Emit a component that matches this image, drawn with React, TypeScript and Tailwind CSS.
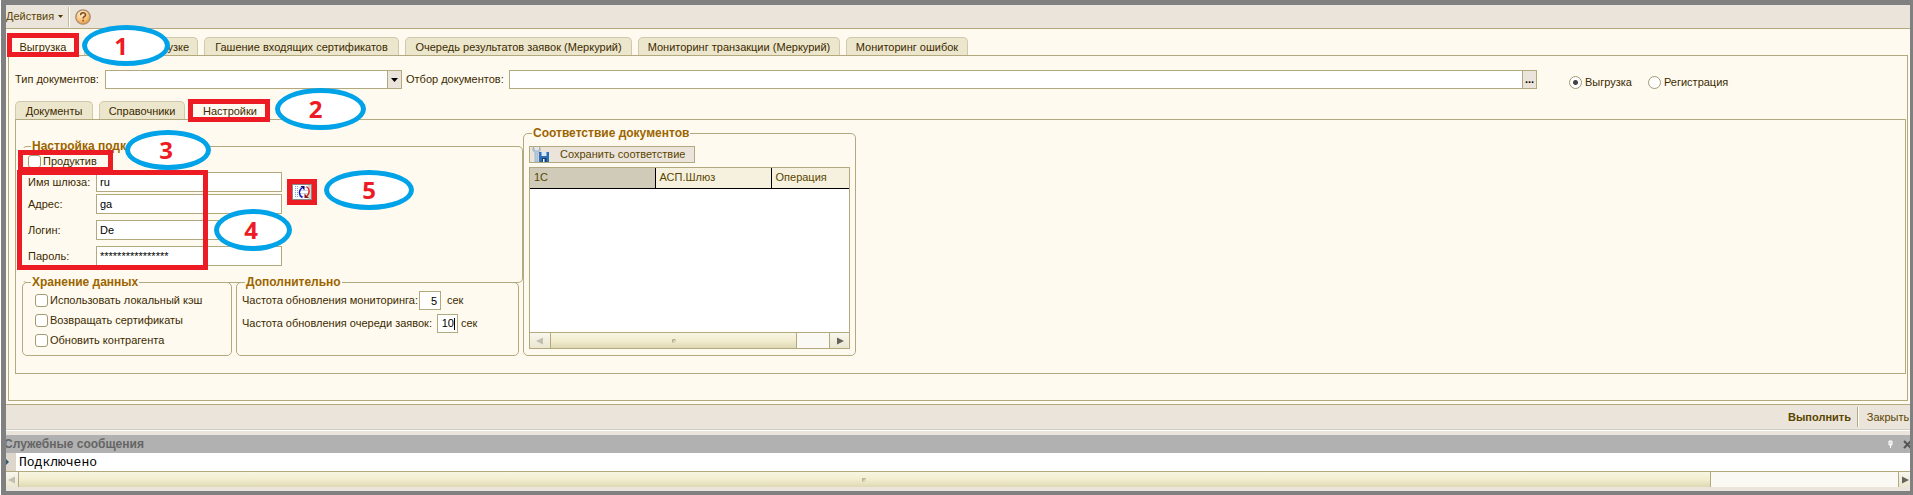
import { useState } from "react";
import type { ReactNode } from "react";

type Tab = { title: string; width: string }

const mainTabs: Tab[] = [
  { title: "Выгрузка", width: "w-[70px]" },
  { title: "Данные к выгрузке", width: "w-[114px]" },
  { title: "Гашение входящих сертификатов", width: "w-[195px]" },
  { title: "Очередь результатов заявок (Меркурий)", width: "w-[227px]" },
  { title: "Мониторинг транзакции (Меркурий)", width: "w-[202px]" },
  { title: "Мониторинг ошибок", width: "w-[122px]" },
]

const subTabs: Tab[] = [
  { title: "Документы", width: "w-[78px]" },
  { title: "Справочники", width: "w-[86px]" },
  { title: "Настройки", width: "w-[78px]" },
]

const gatewayFields = [
  { id: "gateName", label: "Имя шлюза:", value: "ru", space: "mb-0.5" },
  { id: "address", label: "Адрес:", value: "ga", space: "mb-1.5" },
  { id: "login", label: "Логин:", value: "De", space: "mb-1.5" },
  { id: "password", label: "Пароль:", value: "****************", space: "text-[11px]" },
]

const frames = [
  "left-[7px] top-[33px] w-[72px] h-[24px]",
  "left-[188px] top-[99px] w-[82px] h-[23px]",
  "left-[18px] top-[150px] w-[95px] h-[22px]",
  "left-[17px] top-[170px] w-[191px] h-[100px]",
  "left-[287px] top-[179px] w-[30px] h-[26px]",
]

const bubbles = [
  { n: 1, place: "left-[82px] top-[25px] w-[88px] h-[41px] pr-2.5" },
  { n: 2, place: "left-[275px] top-[88px] w-[91px] h-[42px] pr-2.5" },
  { n: 3, place: "left-[125px] top-[130px] w-[86px] h-[40px] pr-1" },
  { n: 4, place: "left-[214px] top-[209px] w-[78px] h-[42px] pr-1" },
  { n: 5, place: "left-[324px] top-[170px] w-[90px] h-[40px]" },
]

function Tabs({ tabs, active, onSelect }: { tabs: Tab[]; active: number; onSelect: (i: number) => void }) {
  return (
    <div role="tablist" className="flex items-end gap-1.5">
      {tabs.map((tab, i) => (
        <button
          key={tab.title}
          role="tab"
          aria-selected={i === active}
          onClick={() => onSelect(i)}
          className={`shrink-0 rounded-t-[5px] border border-b-0 text-center leading-[16px] whitespace-nowrap ${tab.width} ${
            i === active ? "-mb-px h-[19px] border-[#b3a97f] border-t-[#ffd58a] bg-[#fffaef]" : "h-[18px] border-[#cfc8ac] bg-[#ece6cd]"
          }`}
        >
          {tab.title}
        </button>
      ))}
    </div>
  )
}

function Group({ title, className, children }: { title: string; className: string; children: ReactNode }) {
  return (
    <fieldset className={`min-w-0 rounded-[5px] border border-[#b3a97f] ${className}`}>
      <legend className="relative ml-2 bg-[#fffaef] px-px text-[12px] leading-[14px] font-bold text-[#9c6500]">{title}</legend>
      {children}
    </fieldset>
  )
}

function Check({ label }: { label: string }) {
  return (
    <label className="flex h-[13px] items-center gap-0.5">
      <input type="checkbox" className="size-[13px] appearance-none rounded-[3px] border border-[#a39a72] bg-white checked:bg-[#9c6500]" />
      {label}
    </label>
  )
}

function Radio({ label, checked }: { label: string; checked?: boolean }) {
  return (
    <label className="flex items-center gap-[3px]">
      <input
        type="radio"
        name="mode"
        defaultChecked={checked}
        className="size-[13px] appearance-none rounded-full border border-[#a39a72] bg-white checked:bg-[radial-gradient(circle,#444_0_2px,#fff_3px)]"
      />
      {label}
    </label>
  )
}

function Arrow({ dir, color }: { dir: "left" | "right"; color: string }) {
  return (
    <svg viewBox="0 0 8 8" className="size-2 shrink-0" fill={color}>
      <path d={dir === "left" ? "M7 0.5v7L0 4z" : "M1 0.5v7L8 4z"} />
    </svg>
  )
}

function ScrollBar({ edge, thumb, track }: { edge: string; thumb: string; track: string }) {
  return (
    <div className="flex h-4 border-t border-[#b3a97f] bg-[#fbf9f3]">
      <button aria-label="Влево" className={`flex items-center justify-center bg-linear-to-b from-[#f9f7ee] to-[#ebe6cf] ${edge}`}>
        <Arrow dir="left" color="#c3bfb0" />
      </button>
      <div className={`flex items-center justify-center border-x border-[#b3a97f] bg-linear-to-b from-[#f8f5e2] via-[#f2edcf] to-[#dfd8b4] ${thumb}`}>
        <span className="size-1 rounded-full border-t border-l border-[#a8a184] bg-[#e0dabd]" />
      </div>
      <div className={track} />
      <button aria-label="Вправо" className={`flex items-center justify-center border-l border-[#b3a97f] bg-linear-to-b from-[#f9f7ee] to-[#ebe6cf] ${edge}`}>
        <Arrow dir="right" color="#66645c" />
      </button>
    </div>
  )
}

function HelpIcon() {
  return (
    <svg viewBox="0 0 16 16" className="size-4">
      <defs>
        <radialGradient id="help" cx="0.4" cy="0.3" r="0.8">
          <stop offset="0" stopColor="#fff1cf" />
          <stop offset="0.55" stopColor="#fbc278" />
          <stop offset="1" stopColor="#e58a2c" />
        </radialGradient>
      </defs>
      <circle cx="8" cy="8" r="7.2" fill="url(#help)" stroke="#a58a74" strokeWidth="1.3" />
      <path d="M5.6 6.2c0-3.2 4.9-3 4.9-.2 0 1.7-2.4 1.7-2.4 3.4" fill="none" stroke="#7a4a22" strokeWidth="1.5" />
      <rect x="7.3" y="10.8" width="1.6" height="1.6" fill="#7a4a22" />
    </svg>
  )
}

function RefreshIcon() {
  return (
    <svg viewBox="0 0 20 16" className="h-4 w-5">
      <rect width="20" height="16" fill="#fff" />
      <path d="M17.5 1v14" stroke="#ddd3c4" strokeWidth="3" />
      <rect x="0.5" y="0.5" width="19" height="15" fill="none" stroke="#111" strokeDasharray="1 1" />
      <path d="M3.5 2v12M5.5 2v12" stroke="#6fa6dc" strokeDasharray="1 1" />
      <path d="M7 3.5h9M7 6.5h9M7 9.5h9M7 12.500h9" stroke="#cfd8e2" />
      <path d="M10.500 13.500C6.500 11.500 6.500 6 10 4" fill="none" stroke="#1212c8" strokeWidth="1.400" />
      <path d="M8.500 2h4v4.500z" fill="#101080" />
      <path d="M14.500 2.500c3.500 2 3.500 7 .5 9.500" fill="none" stroke="#e02020" strokeWidth="1.400" />
      <path d="M12.500 9.500V14h4.500z" fill="#8c1a1a" />
    </svg>
  )
}

function SaveIcon() {
  return (
    <svg viewBox="0 0 18 15" className="h-[15px] w-[18px]">
      <path d="M1.500 0C0 2 .8 4.500 3 5.500V15h3V5.500C8.500 4.500 9 2 7.500 0v3L5.500 4h-2L2.500 3z" fill="#b7cbdd" stroke="#8aa4bd" strokeWidth="0.600" />
      <path d="M7 5h10v10H7z" fill="#2f6fb4" />
      <path d="M9.500 5h5v4h-5z" fill="#d9e9f8" />
      <path d="M10 11h4.500v4H10z" fill="#123f78" />
      <path d="M11 12h1.500v3H11z" fill="#fff" />
    </svg>
  )
}

export default function App() {
  const [mainTab, setMainTab] = useState(0)
  const [subTab, setSubTab] = useState(2)

  return (
    <div className="relative ml-px overflow-hidden border-t-[5px] border-r-[3px] border-b-[5px] border-l-[5px] border-[#808080] bg-[#fffaef] font-['Liberation_Sans',Arial,sans-serif] text-[11px] leading-[13px] text-[#3b2a00]">
      {/* toolbar */}
      <div className="flex h-6 items-center border-b border-[#b3a97f] bg-[#ebe4da]">
        <button className="flex items-center gap-1 text-[#5a4500]">
          Действия
          <svg viewBox="0 0 5 3" className="h-[3px] w-[5px]" fill="#4a3800"><path d="M0 0h5L2.500 3z" /></svg>
        </button>
        <span className="mr-[5px] ml-[5px] h-5 w-0.5 border-l border-[#c3ba96] bg-white" />
        <button aria-label="Справка"><HelpIcon /></button>
      </div>

      {/* main tabs */}
      <div className="px-0.5 pt-2 pb-[3px]">
        <Tabs tabs={mainTabs} active={mainTab} onSelect={setMainTab} />

        <div className="border border-[#b3a97f] pt-3.5 pr-px pb-[26px] pl-1.5">
          <div className="flex items-end">
            <div className="flex items-center">
              <label htmlFor="docType" className="w-[90px]">Тип документов:</label>
              <div className="relative h-[19px] w-[297px]">
                <select id="docType" className="size-full appearance-none border border-[#b3a97f] bg-white px-1">
                  <option></option>
                </select>
                <span className="pointer-events-none absolute inset-y-0 right-0 flex w-[15px] items-center justify-center border border-[#b3a97f] bg-[#ebe4da]">
                  <svg viewBox="0 0 7 4" className="h-1 w-[7px]"><path d="M0 0h7L3.500 4z" /></svg>
                </span>
              </div>
            </div>
            <div className="ml-1 flex flex-1 items-center">
              <label htmlFor="docFilter" className="w-[103px]">Отбор документов:</label>
              <input id="docFilter" className="h-[19px] min-w-0 flex-1 border border-[#b3a97f] bg-white px-1" />
              <button className="-ml-px h-[19px] w-[15px] border border-[#b3a97f] bg-[#ebe4da] font-bold text-black">...</button>
            </div>
            <div className="ml-8 flex w-[337px] gap-4">
              <Radio label="Выгрузка" checked />
              <Radio label="Регистрация" />
            </div>
          </div>

          <div className="pt-3">
            <Tabs tabs={subTabs} active={subTab} onSelect={setSubTab} />
            <div className="flex border border-[#b3a97f] pt-1.5 pb-[17px] pl-1.5">
              <div className="w-[501px] pt-[13px]">
                <Group title="Настройка подключения" className="border-l-transparent pb-4">
                  <div className="flex pt-0.5 pl-[5px]">
                    <div>
                      <div className="pb-1"><Check label="Продуктив" /></div>
                      {gatewayFields.map((field) => (
                        <div key={field.id} className={`flex items-center ${field.space}`}>
                          <label htmlFor={field.id} className="w-[68px]">{field.label}</label>
                          <input id={field.id} defaultValue={field.value} className="h-5 w-[186px] border border-[#b3a97f] bg-white px-[3px] text-black" />
                        </div>
                      ))}
                    </div>
                    <button aria-label="Обновить" className="mt-[29px] ml-2.5 self-start"><RefreshIcon /></button>
                  </div>
                </Group>

                <div className="-mt-2 flex gap-1">
                  <Group title="Хранение данных" className="w-[210px]">
                    <div className="flex flex-col gap-[7px] pt-[5px] pb-2 pl-3">
                      <Check label="Использовать локальный кэш" />
                      <Check label="Возвращать сертификаты" />
                      <Check label="Обновить контрагента" />
                    </div>
                  </Group>
                  <Group title="Дополнительно" className="w-[283px]">
                    <div className="flex flex-col gap-1 pt-0.5 pl-[5px]">
                      <div className="flex items-center">
                        <label htmlFor="monitorRate" className="w-[177px] whitespace-nowrap">Частота обновления мониторинга:</label>
                        <input id="monitorRate" defaultValue="5" className="mr-1.5 h-[19px] w-[22px] border border-[#b3a97f] bg-white px-[3px] text-right text-black" />
                        сек
                      </div>
                      <div className="flex items-center">
                        <label htmlFor="queueRate" className="w-[195px] whitespace-nowrap">Частота обновления очереди заявок:</label>
                        <span className="mr-[3px] flex h-[19px] w-[21px] items-center border border-[#b3a97f] bg-white">
                          <input id="queueRate" defaultValue="10" className="w-[16px] min-w-0 text-right text-black" />
                          <span className="h-3 w-px bg-black" />
                        </span>
                        сек
                      </div>
                    </div>
                  </Group>
                </div>
              </div>

              <Group title="Соответствие документов" className="w-[333px] pb-1.5">
                <div className="px-[5px] pt-1.5">
                  <button className="flex h-[17px] w-[166px] items-center gap-2.5 border border-[#b3a97f] bg-[#ebe4da] pl-0.5 text-[#5a4500]">
                    <SaveIcon />
                    Сохранить соответствие
                  </button>
                  <div className="mt-1 border border-[#b3a97f] bg-white">
                    <table className="w-full table-fixed border-collapse text-left text-[#5a4500]">
                      <thead>
                        <tr className="h-5 border-b border-black bg-[#f5f1de]">
                          <th className="w-[125px] border-r border-black bg-[#cfcbb8] px-1 font-normal">1С</th>
                          <th className="w-[116px] border-r border-black px-1 font-normal">АСП.Шлюз</th>
                          <th className="px-1 font-normal">Операция</th>
                        </tr>
                      </thead>
                      <tbody>
                        <tr className="h-36"><td /><td /><td /></tr>
                      </tbody>
                    </table>
                    <ScrollBar edge="w-5" thumb="w-[247px]" track="flex-1" />
                  </div>
                </div>
              </Group>
            </div>
          </div>
        </div>
      </div>

      {/* form commands */}
      <div className="flex h-[26px] items-center justify-end border-t border-b border-t-[#b3a97f] border-b-[#d0cdc6] bg-[#ebe4da] text-[#5a4500]">
        <button className="font-bold">Выполнить</button>
        <span className="mx-1.5 h-5 w-0.5 border-l border-[#b3a97f] bg-white" />
        <button className="w-[45px] pl-px whitespace-nowrap">Закрыть</button>
      </div>

      {/* service messages */}
      <div className="border-t border-white bg-[#ebe4da] pt-1 pb-1">
        <div className="-mx-0.5 flex h-[18px] items-center justify-between bg-[#b1b1b1] text-[12px] font-bold text-[#656565]">
          <span>Служебные сообщения</span>
          <div className="flex items-center gap-2.5">
            <svg viewBox="0 0 5 8" className="h-2 w-[5px]"><path d="M1 1h3v4H1zM2.500 5v3" fill="#ddd" stroke="#fff" /></svg>
            <svg viewBox="0 0 9 9" className="size-[9px]"><path d="M1 1l7 7M1 8l7-7" stroke="#555" strokeWidth="2" /></svg>
          </div>
        </div>
        <div className="flex h-[18px] items-center bg-white font-['Liberation_Mono',monospace] text-[13px] text-black">
          <span className="flex h-full w-2.5 items-center bg-[#ddd6cb]">
            <svg viewBox="0 0 3 6" className="h-1.5 w-[3px]" fill="#2d5878"><path d="M0 0l3 3-3 3z" /></svg>
          </span>
          <span className="pl-[3px]">Подключено</span>
        </div>
        <ScrollBar edge="w-3" thumb="grow-9" track="grow" />
      </div>

      {/* step markers over the form */}
      <div className="pointer-events-none absolute -top-[5px] -left-1.5">
        {frames.map((place) => (
          <div key={place} className={`absolute border-[5px] border-[#ed1c24] ${place}`} />
        ))}
        {bubbles.map((b) => (
          <div
            key={b.n}
            className={`absolute flex items-center justify-center rounded-[50%] border-[5px] border-[#00a2e8] bg-white font-['Open_Sans',sans-serif] text-[24px] leading-none font-bold text-[#ed1c24] ${b.place}`}
          >
            {b.n}
          </div>
        ))}
      </div>
    </div>
  )
}
